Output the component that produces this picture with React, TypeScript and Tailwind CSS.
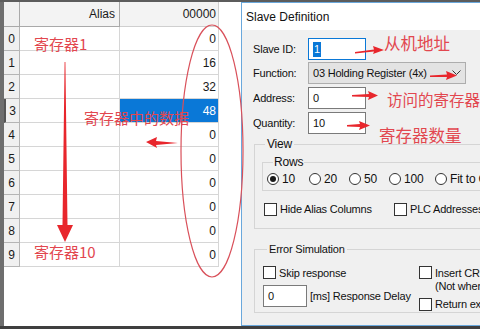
import React from 'react';

const ui = { fontFamily: '"Liberation Sans", Arial, sans-serif' };
const cjk = { fontFamily: '"Noto Sans CJK SC", "Noto Sans", sans-serif' };

const values = [0, 16, 32, 48, 0, 0, 0, 0, 0, 0];

function Radio({ label, checked, width }: { label: string; checked?: boolean; width: string }) {
  return (
    <div className={`flex items-center gap-[3px] shrink-0 ${width}`}>
      <span className="w-[12px] h-[12px] rounded-full border border-[#333] bg-white flex items-center justify-center">
        {checked && <span className="w-[6px] h-[6px] rounded-full bg-[#1a1a1a]" />}
      </span>
      <span className="whitespace-nowrap">{label}</span>
    </div>
  );
}

function Check({ label }: { label: string }) {
  return (
    <div className="flex items-center gap-[3px]">
      <span className="w-[13px] h-[13px] border border-[#333] bg-white shrink-0" />
      <span className="whitespace-nowrap">{label}</span>
    </div>
  );
}

function Field({ label, children }: { label: string; children: React.ReactNode }) {
  return (
    <div className="flex items-center h-[22px]">
      <span className="w-[55px]">{label}</span>
      {children}
    </div>
  );
}

function RegisterGrid() {
  return (
    <div className="grid grid-cols-[16px_100px_99px] text-[12px] text-[#1a1a1a]" style={ui}>
      <div className="h-[25px] bg-[#f0f0f0] border-r border-b border-[#a9a9a9]" />
      <div className="h-[25px] bg-[#f3f3f3] border-r border-b border-[#a9a9a9] flex items-center justify-end pr-[4px]">
        Alias
      </div>
      <div className="h-[25px] bg-[#f3f3f3] border-r border-b border-[#cfcfcf] flex items-center justify-end pr-[2px]">
        00000
      </div>
      {values.map((v, i) => (
        <React.Fragment key={i}>
          <div
            className={`h-[24px] bg-[#f0f0f0] border-r border-b border-[#b5b5b5] flex items-center justify-center ${
              i === 3 ? 'border-l-2 border-l-[#555]' : ''
            }`}
          >
            {i}
          </div>
          <div className="h-[24px] border-r border-b border-[#d6d6d6]" />
          <div
            className={`h-[24px] border-r border-b border-[#d6d6d6] flex items-center justify-end pr-[2px] ${
              i === 3 ? 'bg-[#0a78d7] text-white' : ''
            }`}
          >
            {v}
          </div>
        </React.Fragment>
      ))}
    </div>
  );
}

function SlaveDialog() {
  return (
    <div className="flex-1 flex flex-col border-t border-l border-b border-[#6aa8dc] overflow-hidden text-[11px] text-[#111] tracking-[-0.2px]" style={ui}>
      <div className="h-[27px] bg-white flex items-center pl-[4px] text-[12px] tracking-normal">Slave Definition</div>
      <div className="flex-1 bg-[#f0f0f0] pl-[11px] pt-[8px] flex flex-col">
        <div className="flex flex-col gap-[2px]">
          <Field label="Slave ID:">
            <div className="w-[58px] h-[22px] bg-white border border-[#0a78d7] flex items-center pl-[4px]">
              <span className="bg-[#0a78d7] text-white px-[1px] leading-[15px]">1</span>
            </div>
          </Field>
          <Field label="Function:">
            <div className="w-[158px] h-[22px] bg-[#e3e3e3] border border-[#adadad] flex items-center justify-between pl-[4px] pr-[4px]">
              <span>03 Holding Register (4x)</span>
              <svg width="9" height="6" viewBox="0 0 9 6">
                <path d="M0.5 0.5 L4.5 4.5 L8.5 0.5" stroke="#333" strokeWidth="1" fill="none" />
              </svg>
            </div>
          </Field>
          <div className="mt-[1px]">
            <Field label="Address:">
              <div className="w-[58px] h-[22px] bg-white border border-[#7a7a7a] flex items-center pl-[4px]">0</div>
            </Field>
          </div>
          <div className="mt-[1px]">
            <Field label="Quantity:">
              <div className="w-[58px] h-[22px] bg-white border border-[#7a7a7a] flex items-center pl-[4px]">10</div>
            </Field>
          </div>
        </div>

        <fieldset className="ml-[1px] mt-[1px] w-[260px] h-[94px] border border-[#d5d5d5] pl-[7px] pr-0">
          <legend className="ml-[3px] px-[2px] text-[12px]">View</legend>
          <fieldset className="w-[240px] h-[38px] border border-[#d5d5d5] pl-[4px] mt-0">
            <legend className="ml-[6px] px-[1px] text-[12px]">Rows</legend>
            <div className="flex items-center text-[12px] -mt-[1px]">
              <Radio label="10" checked width="w-[42px]" />
              <Radio label="20" width="w-[40px]" />
              <Radio label="50" width="w-[40px]" />
              <Radio label="100" width="w-[46px]" />
              <Radio label="Fit to Grid" width="w-[70px]" />
            </div>
          </fieldset>
          <div className="flex items-center mt-[10px] pl-[2px]">
            <div className="w-[130px] shrink-0">
              <Check label="Hide Alias Columns" />
            </div>
            <Check label="PLC Addresses (Base 1)" />
          </div>
        </fieldset>

        <fieldset className="ml-[1px] mt-[12px] w-[260px] h-[72px] border border-[#d5d5d5] pl-[8px]">
          <legend className="ml-[4px] px-[2px]">Error Simulation</legend>
          <div className="flex mt-[7px]">
            <div className="w-[156px] shrink-0 flex flex-col gap-[4px]">
              <Check label="Skip response" />
              <div className="flex items-center gap-[3px]">
                <div className="w-[44px] h-[22px] bg-white border border-[#7a7a7a] flex items-center pl-[4px]">0</div>
                <span className="whitespace-nowrap">[ms] Response Delay</span>
              </div>
            </div>
            <div className="flex flex-col shrink-0">
              <Check label="Insert CRC error" />
              <span className="pl-[16px] leading-[11px] whitespace-nowrap">(Not when using TCP/IP)</span>
              <div className="mt-[4px]">
                <Check label="Return exception 06" />
              </div>
            </div>
          </div>
        </fieldset>
      </div>
    </div>
  );
}

function Annotations() {
  return (
    <div className="absolute inset-0 pointer-events-none" style={cjk}>
      <svg className="absolute inset-0" width="480" height="329" viewBox="0 0 480 329">
        <ellipse cx="212" cy="151" rx="31" ry="126" fill="none" stroke="#d9505a" strokeWidth="1.2" />
        {/* vertical arrow */}
        <polygon points="64.6,62 65.4,62 67.5,225 73,225 65,242 57,225 62.5,225" fill="#e8262c" />
        {/* left arrow */}
        <polygon points="146,142 157,137 156,141 178,143 156,145 157,148" fill="#e8262c" />
        {/* right arrows */}
        <polygon points="355,52 374,49.5 373,46 384,50 373,54 374,51.5 355,53.5" fill="#e8262c" />
        <polygon points="352,95 369,94 368,91 378,95.5 368,100 369,97 352,96.5" fill="#e8262c" />
        <polygon points="347,125 360,124 359,121 370,125.5 359,130 360,127 347,126.5" fill="#e8262c" />
        <polygon points="430,75.5 447,74.5 446,71 457,75.5 446,80 447,77 430,77" fill="#e8262c" />
      </svg>
      <span className="absolute left-[34px] top-[36px] text-[15px] leading-none text-[#e2474f]">寄存器1</span>
      <span className="absolute left-[34px] top-[244px] text-[15px] leading-none text-[#e2474f]">寄存器10</span>
      <span className="absolute left-[84px] top-[110px] text-[15px] leading-none text-[#e2474f]">寄存器中的数据</span>
      <span className="absolute left-[384px] top-[35px] text-[16.5px] leading-none text-[#e2474f]">从机地址</span>
      <span className="absolute left-[387px] top-[92px] text-[15.5px] leading-none text-[#e2474f] whitespace-nowrap">访问的寄存器</span>
      <span className="absolute left-[379px] top-[127px] text-[16.5px] leading-none text-[#e2474f]">寄存器数量</span>
    </div>
  );
}

export default function App() {
  return (
    <div className="relative w-[480px] h-[329px] overflow-hidden bg-[#4b4b4b] flex flex-col">
      <div className="h-[2px] bg-[#5c5c5c]" />
      <div className="flex-1 flex">
        <div className="w-[240px] bg-white border-l-4 border-[#6e6e6e] flex flex-col">
          <RegisterGrid />
        </div>
        <div className="w-[1px] bg-white" />
        <SlaveDialog />
      </div>
      <div className="h-[3px] bg-[#3f3f3f]" />
      <Annotations />
    </div>
  );
}
